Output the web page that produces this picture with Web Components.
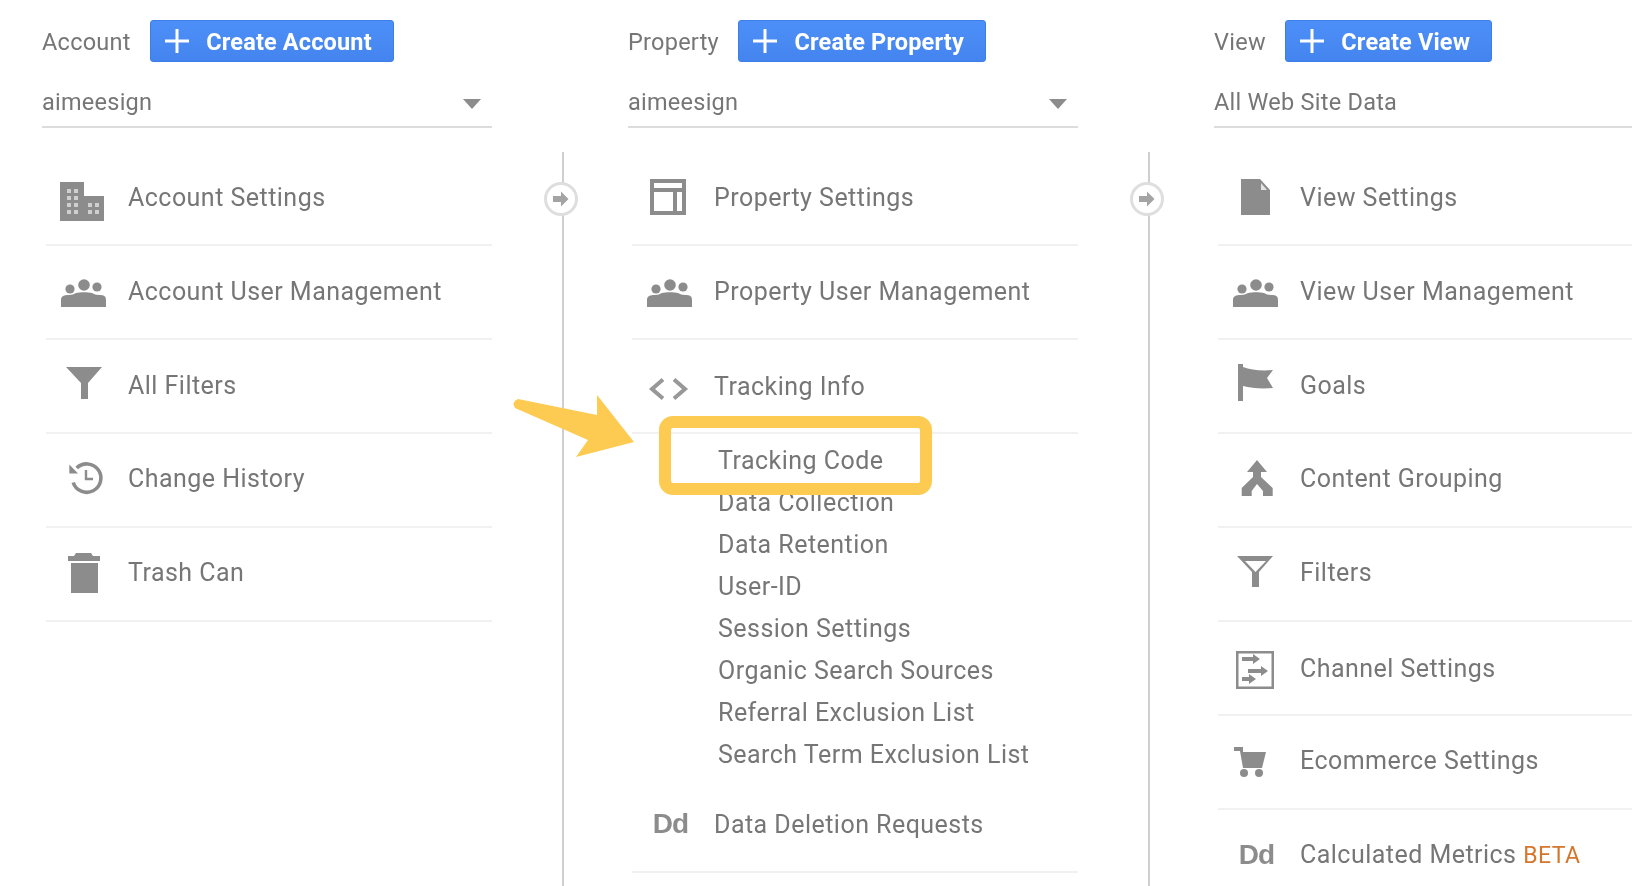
<!DOCTYPE html>
<html>
<head>
<meta charset="utf-8">
<title>Admin</title>
<style>
  html, body { margin: 0; height: 100%; background: #fff; overflow: hidden; }
</style>
</head>
<body>

<ga-page>
  <ga-column label="Account" create="Create Account" selected="aimeesign" caret connector>
    <ga-row icon="building">Account Settings</ga-row>
    <ga-row icon="users">Account User Management</ga-row>
    <ga-row icon="funnel">All Filters</ga-row>
    <ga-row icon="history" style="--nudge: -2px">Change History</ga-row>
    <ga-row icon="trash" style="--nudge: -2px">Trash Can</ga-row>
  </ga-column>

  <ga-column label="Property" create="Create Property" selected="aimeesign" caret connector>
    <ga-row icon="layout">Property Settings</ga-row>
    <ga-row icon="users">Property User Management</ga-row>
    <ga-row icon="code" style="--nudge: 2px">Tracking Info</ga-row>
    <ga-sublist>
      <div>Tracking Code</div>
      <div>Data Collection</div>
      <div>Data Retention</div>
      <div>User-ID</div>
      <div>Session Settings</div>
      <div>Organic Search Sources</div>
      <div>Referral Exclusion List</div>
      <div>Search Term Exclusion List</div>
    </ga-sublist>
    <ga-row icon="dd">Data Deletion Requests</ga-row>
  </ga-column>

  <ga-column label="View" create="Create View" selected="All Web Site Data">
    <ga-row icon="file">View Settings</ga-row>
    <ga-row icon="users">View User Management</ga-row>
    <ga-row icon="flag">Goals</ga-row>
    <ga-row icon="merge" style="--nudge: -2px">Content Grouping</ga-row>
    <ga-row icon="funnel-line" style="--nudge: -2px">Filters</ga-row>
    <ga-row icon="channels" style="--nudge: 3px">Channel Settings</ga-row>
    <ga-row icon="cart" style="--nudge: -2px">Ecommerce Settings</ga-row>
    <ga-row icon="dd" style="--nudge: -2px">Calculated Metrics <ga-beta>BETA</ga-beta></ga-row>
  </ga-column>

  <ga-callout></ga-callout>
</ga-page>

<script>
// icons are drawn on a 48px box, centred on the row
const ICONS = {
  building: `
    <path d="M1 9H25V23H45V48H1Z"/>
    <g fill="#cfcfcf">
      <rect x="8" y="16" width="4" height="4"/><rect x="15" y="16" width="4" height="4"/>
      <rect x="8" y="23" width="4" height="4"/><rect x="15" y="23" width="4" height="4"/>
      <rect x="8" y="30" width="4" height="4"/><rect x="15" y="30" width="4" height="4"/>
      <rect x="8" y="37" width="4" height="4"/><rect x="15" y="37" width="4" height="4"/>
      <rect x="29" y="30" width="4" height="4"/><rect x="36" y="30" width="4" height="4"/>
      <rect x="29" y="37" width="4" height="4"/><rect x="36" y="37" width="4" height="4"/>
    </g>`,
  users: `
    <circle cx="11" cy="22" r="4.6"/><circle cx="25" cy="18" r="5.8"/><circle cx="38" cy="20" r="4.6"/>
    <path d="M2 40V33C2 29 5 28 10 28C13 28 15 27 17 26C21 25 29 25 33 26C35 27 37 28 40 28C45 28 47 29 47 33V40Z"/>`,
  funnel: `<path d="M7 6H43L29 22V38H22V22Z"/>`,
  history: `
    <path d="M17.700 13A14.200 14.200 0 1 1 14.200 27.500" fill="none" stroke="#8c8c8c" stroke-width="3.600"/>
    <path d="M10.300 9.500V18.500H19Z"/>
    <path d="M27 15V24H34" fill="none" stroke="#8c8c8c" stroke-width="2.400"/>`,
  trash: `<path d="M17 4H32L34 7H41V12H9V7H15ZM12 14H39V44H12Z"/>`,
  layout: `<path fill-rule="evenodd" d="M5 6H41V42H5ZM9 10V15H37V10ZM9 19V38H28V19ZM32 19V38H37V19Z"/>`,
  code: `<path d="M18 18.500L7 28L18 37.500M29 18.500L40 28L29 37.500" fill="none" stroke="#989898" stroke-width="4"/>`,
  file: `<path d="M10 6H29L39 17V42H10Z"/><path d="M30 10L36 17H30Z" fill="#e4e4e4"/>`,
  flag: `<path d="M7 3H12V6C20 9 30 10 42 9L36 17L42 27C30 28 20 27 12 25V40H7Z"/>`,
  merge: `<path d="M26 5L36 17H30V22L41.700 33V41H32V36L26 29L20.700 36V41H10.700V33L22 22V17H16Z"/>`,
  'funnel-line': `<path fill-rule="evenodd" d="M6 7H42L28 23V38H21V23ZM14 12L24.500 23L35 12Z"/>`,
  channels: `
    <path fill-rule="evenodd" d="M5 8H43V46H5ZM7.500 10.500V43.500H40.500V10.500Z"/>
    <path d="M11 14H22V11L29 16L22 21V18H11ZM17 26H30V23L37 28L30 33V30H17ZM11 34H18V31L25 36L18 41V38H11Z"/>`,
  cart: `
    <path d="M3 10H12V15H35L31 31H12L9 14H3Z"/>
    <circle cx="13" cy="36" r="4"/><circle cx="28" cy="36" r="4"/>`
};

let iconTemplate = document.createElement('template');
iconTemplate.innerHTML = `
  <style>
    :host { display: block; width: 48px; height: 48px; color: #8c8c8c; }
    svg { display: block; width: 48px; height: 48px; overflow: visible; fill: #8c8c8c; filter: blur(.4px); }
    span {
      display: block;
      box-sizing: border-box;
      width: 48px;
      padding-left: 3px;
      font: 700 28px/48px "Liberation Sans", Arial, sans-serif;
      letter-spacing: -.8px;
      text-align: center;
      filter: blur(.5px);
    }
  </style>
`;

class GaIcon extends HTMLElement {
  constructor() {
    super();
    this.attachShadow({ mode: 'open' });
    this.shadowRoot.appendChild(iconTemplate.content.cloneNode(true));
  }

  connectedCallback() {
    let name = this.getAttribute('name');
    let holder = document.createElement('div');
    // the "Dd" icon is a letter pair, keep it as text
    if (name === 'dd') {
      holder.innerHTML = '<span>Dd</span>';
    } else {
      holder.innerHTML = `<svg viewBox="0 0 48 48">${ICONS[name]}</svg>`;
    }
    this.shadowRoot.appendChild(holder.firstElementChild);
  }
}

let rowTemplate = document.createElement('template');
rowTemplate.innerHTML = `
  <style>
    :host {
      display: flex;
      align-items: center;
      box-sizing: border-box;
      height: 94px;
      margin-left: 4px;
      padding: 0 0 2px 13px;
      border-bottom: 2px solid #f1f1f1;
    }
    .text { margin-left: 21px; margin-top: var(--nudge, 0); white-space: nowrap; }
  </style>
  <ga-icon></ga-icon>
  <div class="text"><slot></slot></div>
`;

class GaRow extends HTMLElement {
  constructor() {
    super();
    this.attachShadow({ mode: 'open' });
    let content = rowTemplate.content.cloneNode(true);
    // name has to be on the icon before it lands in the document
    content.querySelector('ga-icon').setAttribute('name', this.getAttribute('icon'));
    this.shadowRoot.appendChild(content);
  }
}

let betaTemplate = document.createElement('template');
betaTemplate.innerHTML = `
  <style>
    :host { display: inline; color: #d4762c; font-size: 23px; }
  </style>
  <slot></slot>
`;

class GaBeta extends HTMLElement {
  constructor() {
    super();
    this.attachShadow({ mode: 'open' });
    this.shadowRoot.appendChild(betaTemplate.content.cloneNode(true));
  }
}

let sublistTemplate = document.createElement('template');
sublistTemplate.innerHTML = `
  <style>
    :host {
      display: block;
      padding: 6px 0 3px 90px;
      line-height: 42px;
      white-space: nowrap;
    }
  </style>
  <slot></slot>
`;

class GaSublist extends HTMLElement {
  constructor() {
    super();
    this.attachShadow({ mode: 'open' });
    this.shadowRoot.appendChild(sublistTemplate.content.cloneNode(true));
  }
}

let columnTemplate = document.createElement('template');
columnTemplate.innerHTML = `
  <style>
    :host { display: block; position: relative; width: 450px; }
    header { display: flex; align-items: center; gap: 19px; height: 42px; }
    .label, .value { font-size: 23.5px; letter-spacing: .25px; }
    .label { padding-top: 2px; }
    button {
      display: flex;
      align-items: center;
      height: 42px;
      box-sizing: border-box;
      padding: 0 21px 0 13px;
      border: 1px solid #3d7ee6;
      border-radius: 3px;
      background: linear-gradient(#4d8ff8, #4484ee);
      color: #fff;
      font: 700 23.5px Roboto, sans-serif;
      letter-spacing: .16px;
      white-space: nowrap;
    }
    button svg { width: 26px; height: 26px; margin-right: 16.5px; flex: none; }
    .create { padding-top: 2px; }
    .select {
      display: flex;
      align-items: center;
      justify-content: space-between;
      box-sizing: border-box;
      height: 50px;
      margin-top: 16px;
      padding-right: 11px;
      border-bottom: 2px solid #dcdcdc;
    }
    .caret {
      width: 0;
      height: 0;
      margin-top: 4px;
      border: 9.5px solid transparent;
      border-top: 10px solid #8c8c8c;
      border-bottom: 0;
    }
    .list { margin-top: 24px; }
    .line { position: absolute; left: 520px; top: 132px; height: 800px; width: 2px; background: #cfcfcf; }
    .dot {
      position: absolute;
      left: 502px;
      top: 162px;
      box-sizing: border-box;
      width: 34px;
      height: 34px;
      border: 3px solid #dedede;
      border-radius: 50%;
      background: #fff;
    }
    .dot svg { display: block; width: 28px; height: 28px; filter: blur(.4px); }
  </style>
  <header>
    <span class="label"></span>
    <button>
      <svg viewBox="0 0 26 26"><path d="M13 1V25M1 13H25" stroke="#fff" stroke-width="3" fill="none"/></svg>
      <span class="create"></span>
    </button>
  </header>
  <div class="select"><span class="value"></span></div>
  <div class="list"><slot></slot></div>
`;

class GaColumn extends HTMLElement {
  constructor() {
    super();
    this.attachShadow({ mode: 'open' });
    this.shadowRoot.appendChild(columnTemplate.content.cloneNode(true));
  }

  connectedCallback() {
    let root = this.shadowRoot;
    root.querySelector('.label').textContent = this.getAttribute('label');
    root.querySelector('.create').textContent = this.getAttribute('create');
    root.querySelector('.value').textContent = this.getAttribute('selected');
    if (this.hasAttribute('caret')) {
      let caret = document.createElement('span');
      caret.className = 'caret';
      root.querySelector('.select').appendChild(caret);
    }
    if (this.hasAttribute('connector')) {
      let wrap = document.createElement('div');
      wrap.innerHTML = `
        <div class="line"></div>
        <div class="dot"><svg viewBox="0 0 28 28"><path d="M6 11H14V6.500L21.500 14L14 21.500V17H6Z" fill="#a4a4a4"/></svg></div>`;
      root.append(...wrap.children);
    }
  }
}

let calloutTemplate = document.createElement('template');
calloutTemplate.innerHTML = `
  <style>
    :host { display: block; position: absolute; left: 0; top: 0; width: 0; height: 0; }
    .box {
      position: absolute;
      left: 659px;
      top: 416px;
      box-sizing: border-box;
      width: 273px;
      height: 79px;
      border: 12px solid #fdcb52;
      border-radius: 14px;
    }
    svg { position: absolute; left: 505px; top: 390px; width: 140px; height: 75px; overflow: visible; }
  </style>
  <svg viewBox="505 390 140 75">
    <path d="M518 399L597 415V395L634 442L576 457L588 440L515 408Q511 402 518 399Z" fill="#fdcb52"/>
  </svg>
  <div class="box"></div>
`;

class GaCallout extends HTMLElement {
  constructor() {
    super();
    this.attachShadow({ mode: 'open' });
    this.shadowRoot.appendChild(calloutTemplate.content.cloneNode(true));
  }
}

let pageTemplate = document.createElement('template');
pageTemplate.innerHTML = `
  <style>
    :host {
      display: grid;
      grid-template-columns: repeat(3, 586px);
      position: relative;
      box-sizing: border-box;
      height: 886px;
      padding: 20px 0 0 42px;
      overflow: hidden;
      background: #fff;
      color: #767676;
      font: 400 25px Roboto, sans-serif;
      letter-spacing: .47px;
      filter: blur(.3px);
    }
  </style>
  <slot></slot>
`;

class GaPage extends HTMLElement {
  constructor() {
    super();
    this.attachShadow({ mode: 'open' });
    this.shadowRoot.appendChild(pageTemplate.content.cloneNode(true));
  }
}

customElements.define('ga-icon', GaIcon);
customElements.define('ga-row', GaRow);
customElements.define('ga-beta', GaBeta);
customElements.define('ga-sublist', GaSublist);
customElements.define('ga-column', GaColumn);
customElements.define('ga-callout', GaCallout);
customElements.define('ga-page', GaPage);
</script>
</body>
</html>
